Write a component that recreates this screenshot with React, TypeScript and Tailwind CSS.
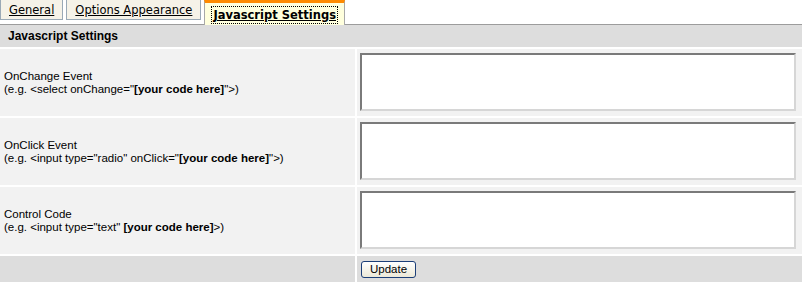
import React, { useState } from "react";

const tabs = ["General", "Options Appearance", "Javascript Settings"];

const rows = [
  {
    title: "OnChange Event",
    before: '(e.g. <select onChange="',
    code: "[your code here]",
    after: '">)',
  },
  {
    title: "OnClick Event",
    before: '(e.g. <input type="radio" onClick="',
    code: "[your code here]",
    after: '">)',
  },
  {
    title: "Control Code",
    before: '(e.g. <input type="text" ',
    code: "[your code here]",
    after: ">)",
  },
];

const App: React.FC = () => {
  const [active, setActive] = useState(2);
  const [values, setValues] = useState(["", "", ""]);

  return (
    <div className="w-[802px] h-[282px] overflow-hidden bg-white text-black">
      {/* tabs */}
      <div className="flex items-start gap-[3px] h-[24px] font-['DejaVu_Sans',sans-serif] text-[11.5px]">
        {tabs.map((t, i) =>
          i === active ? (
            <button
              key={t}
              onClick={() => setActive(i)}
              className="h-[25px] px-[7px] pt-[3px] border-t-[3px] border-t-[#ff8a00] border-x border-x-[#a8a8a8] bg-[#ffffdd] font-bold text-[11.5px] leading-none"
            >
              <span className="underline outline-1 outline-dotted outline-black px-[1px] py-[1px]">{t}</span>
            </button>
          ) : (
            <button
              key={t}
              onClick={() => setActive(i)}
              className="h-[20px] px-[8px] pt-[2px] border border-[#9aa9b6] border-t-0 bg-[#f5f2e8] underline leading-none"
            >
              {t}
            </button>
          )
        )}
      </div>

      <div className="border-t border-[#9c9c9c] font-['Liberation_Sans',Arial,sans-serif] text-[11.5px]">
        <div className="h-[22px] bg-[#dddddd] flex items-center pl-[8px] font-bold text-[12px]">
          Javascript Settings
        </div>

        <div className="grid grid-cols-[355px_1fr] gap-[2px] mt-[2px] bg-white">
          {rows.map((r, i) => (
            <React.Fragment key={r.title}>
              <div className="h-[67px] bg-[#f2f2f2] flex flex-col justify-center pl-[4px] leading-[13px] pt-[1px]">
                <div>{r.title}</div>
                <div>
                  {r.before}
                  <b>{r.code}</b>
                  {r.after}
                </div>
              </div>
              <div className="h-[67px] bg-[#f2f2f2] pl-[3px] pr-[6px] pt-[4px]">
                <textarea
                  value={values[i]}
                  onChange={(e) => {
                    const next = [...values];
                    next[i] = e.target.value;
                    setValues(next);
                  }}
                  className="block w-full h-[58px] resize-none bg-white border-2 border-t-[#7a7a7a] border-l-[#7a7a7a] border-r-[#d6d6d6] border-b-[#d6d6d6] outline-none"
                />
              </div>
            </React.Fragment>
          ))}
          <div className="h-[30px] bg-[#dddddd]" />
          <div className="h-[30px] bg-[#dddddd] pl-[4px] pt-[5px]">
            <button className="h-[17px] w-[55px] rounded-[3px] border border-[#1c3f78] bg-gradient-to-b from-white to-[#ece9d8] text-[11.5px] leading-none">
              Update
            </button>
          </div>
        </div>
      </div>
    </div>
  );
};

export default App;
